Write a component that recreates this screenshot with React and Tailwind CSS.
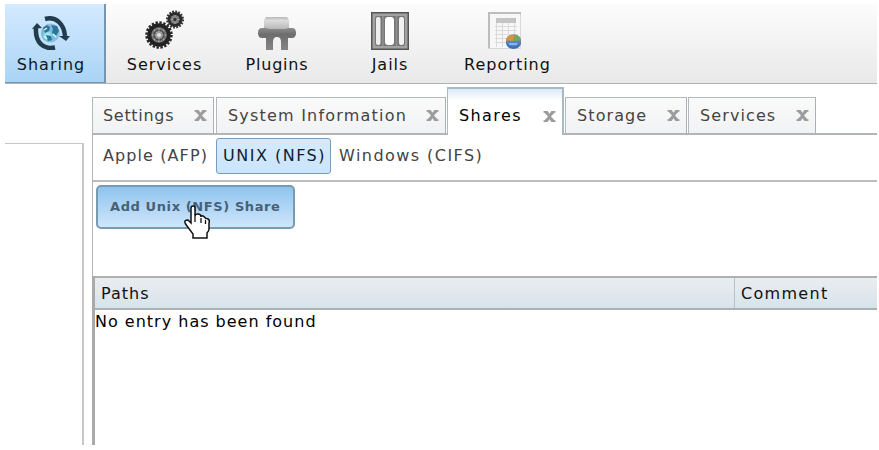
function SharingIcon() {
  return (
    <svg width="38" height="34" viewBox="0 0 38 34">
      <defs>
        <radialGradient id="globe" cx="35%" cy="60%">
          <stop offset="0" stopColor="#b8f2ff" />
          <stop offset="0.6" stopColor="#6fb9d6" />
          <stop offset="1" stopColor="#8fc0e6" />
        </radialGradient>
      </defs>
      <circle cx="18.5" cy="17" r="9.5" fill="url(#globe)" />
      <path d="M11 12l4-3 3 2-1 4-4 2zM19 9l6 1 2 5-3 5-4-3 1-4zM14 19l5 1 1 4-4 1z" fill="#2c7596" />
      <path d="M12 14l3-2M21 18l3 3M12 20l3 3" stroke="#d8fbff" strokeWidth="1.5" />
      <path d="M13 3C24 0 32 8 33 20" fill="none" stroke="#223c4d" strokeWidth="4.5" />
      <path d="M27 20h11l-4 5z" fill="#223c4d" />
      <path d="M23 31.500C11 34 3 26 4 12" fill="none" stroke="#223c4d" strokeWidth="4.500" />
      <path d="M0 13l5-6 5 5z" fill="#223c4d" />
    </svg>
  );
}

function ServicesIcon() {
  return (
    <svg width="40" height="40" viewBox="0 0 40 40">
      <circle cx="14" cy="25" r="12.500" fill="none" stroke="#292929" strokeWidth="2.500" strokeDasharray="2.4 1.527" />
      <circle cx="14" cy="25" r="9.800" fill="#777" stroke="#222" strokeWidth="4" />
      <path d="M14 18v14M7 25h14M9 20l10 10M19 20L9 30" stroke="#aaa" strokeWidth="1.500" />
      <circle cx="14" cy="25" r="5" fill="none" stroke="#444" strokeWidth="1.200" />
      <circle cx="14" cy="25" r="2" fill="#ddd" />
      <circle cx="30" cy="9.500" r="8" fill="none" stroke="#333" strokeWidth="2" strokeDasharray="1.8 1.342" />
      <circle cx="30" cy="9.500" r="6" fill="#777" stroke="#2b2b2b" strokeWidth="3" />
      <path d="M30 5v9M25.500 9.500h9M27 6.500l6 6M33 6.500l-6 6" stroke="#a5a5a5" />
      <circle cx="30" cy="9.500" r="1.700" fill="#333" />
    </svg>
  );
}

function PluginsIcon() {
  return (
    <svg width="38" height="33" viewBox="0 0 38 33">
      <defs>
        <linearGradient id="plugTop" x2="0" y2="1">
          <stop offset="0" stopColor="#b8b8b8" />
          <stop offset="0.25" stopColor="#dcdcdc" />
          <stop offset="1" stopColor="#b0b0b0" />
        </linearGradient>
        <linearGradient id="plugBase" x2="0" y2="1">
          <stop offset="0" stopColor="#8c8c8c" />
          <stop offset="0.3" stopColor="#6d6d6d" />
          <stop offset="1" stopColor="#858585" />
        </linearGradient>
      </defs>
      <path d="M8 0h21l2 3v11H6V3z" fill="url(#plugTop)" />
      <path d="M4 11h4l3 1h16l3-1h4q4 0 4 5t-4 5h-4v12h-7v-8q0-5-4-5t-4 5v8H8V21H4q-4 0-4-5t4-5z" fill="url(#plugBase)" />
    </svg>
  );
}

function JailsIcon() {
  return (
    <svg width="38" height="38" viewBox="0 0 38 38">
      <rect width="38" height="38" fill="#555" />
      <rect x="1.500" y="1.500" width="35" height="35" fill="#a2a2a2" />
      <rect x="4" y="4" width="30" height="30" rx="2" fill="#777" />
      <rect x="5" y="5" width="4.500" height="28" rx="2" fill="#eee" />
      <rect x="14" y="5" width="9" height="28" rx="3" fill="#fff" />
      <rect x="28" y="5" width="5" height="28" rx="2" fill="#f2f2f2" />
      <path d="M12 4v30M25.500 4v30" stroke="#929292" strokeWidth="1.500" />
    </svg>
  );
}

function ReportingIcon() {
  return (
    <svg width="34" height="38" viewBox="0 0 34 38">
      <rect x="0.500" y="0.500" width="32" height="36" fill="#f7f7f7" stroke="#d8d8d8" />
      <path d="M0 1h33M1 0v36" stroke="#bdbdbd" strokeWidth="2" />
      <rect x="8" y="6" width="20" height="5" fill="#c4c4c4" />
      <path d="M7 14.500h22M7 18.500h22M7 22.500h22M7 26.500h12M7 30.500h12M8.500 11v24M14.500 11v24M20.500 11v12M26.500 11v12" stroke="#dadada" />
      <ellipse cx="25.500" cy="31" rx="7.500" ry="6" fill="#436eae" />
      <ellipse cx="25.500" cy="28.500" rx="7.500" ry="6" fill="#5984c2" />
      <path d="M25.500 29l-7.500-.5q1-6.500 8.500-6z" fill="#d19346" />
      <path d="M25.500 29l1-6.500q6 .5 6.500 6z" fill="#79a65a" />
      <path d="M21 32h8" stroke="#7dbbed" strokeWidth="2" />
    </svg>
  );
}

function CloseMark() {
  return (
    <svg className="shrink-0" width="13" height="11" viewBox="0 0 13 12">
      <path d="M0 0h4.500l2 3 2-3H13v2h-1L8.500 5.500v1L12 10h1v2H8.500l-2-3-2 3H0v-2h1l3.500-3.500v-1L1 2H0z" fill="#9c9c9c" />
    </svg>
  );
}

function ToolItem({ icon, label, box, iconBox }) {
  return (
    <div className={`flex h-full flex-col items-center ${box}`}>
      <div className={`flex h-[46px] items-end ${iconBox}`}>{icon}</div>
      <span className="mt-[5px] leading-5">{label}</span>
    </div>
  );
}

function Tab({ label, box, text }) {
  return (
    <div className={`flex items-center justify-between border border-b-0 pr-[6px] pl-[11px] ${box}`}>
      <span className={text}>{label}</span>
      <CloseMark />
    </div>
  );
}

const idleTab = "h-[36px] border-[#b4b9bd] border-r-[#aab0b5] bg-linear-to-b from-[#fafafa] to-[#f1f2f3] text-[#444]";

export default function App() {
  return (
    <div className="h-[450px] w-[879px] overflow-hidden bg-white pt-[4px] pl-[5px] font-['DejaVu_Sans',Verdana,sans-serif] text-[16px] leading-5 whitespace-nowrap text-[#111]">
      <div className="flex h-[441px] w-[872px] flex-col overflow-hidden">
        <header className="flex h-[80px] shrink-0 border-b border-[#adb3b7] bg-linear-to-b from-[#fcfcfc] to-[#e9e9e9]">
          <ToolItem
            icon={<SharingIcon />}
            label="Sharing"
            box="w-[101px] h-[80px] shrink-0 border-r-2 border-b border-[#7696b0] bg-linear-to-b from-[#d4eaff] to-[#aad4f5] pr-[7px] tracking-[1px] text-[#0d1726]"
            iconBox=""
          />
          <ToolItem icon={<ServicesIcon />} label="Services" box="w-[117px] tracking-[1px]" iconBox="" />
          <ToolItem icon={<PluginsIcon />} label="Plugins" box="w-[108px] tracking-[0.8px]" iconBox="" />
          <ToolItem icon={<JailsIcon />} label="Jails" box="w-[118px] tracking-[1px]" iconBox="" />
          <ToolItem icon={<ReportingIcon />} label="Reporting" box="w-[117px] tracking-[1px]" iconBox="pr-[6px]" />
        </header>

        <div className="flex min-h-0 flex-1">
          <aside className="mt-[59px] w-[79px] shrink-0 border-t border-r-2 border-[#c7c7c7]" />

          <main className="ml-[8px] flex min-w-0 flex-1 flex-col">
            <nav className="flex h-[51px] shrink-0 items-end border-b-2 border-[#b1b5b8]">
              <Tab label="Settings" box={`w-[122px] mr-[2px] ${idleTab}`} text="-ml-px tracking-[0.7px]" />
              <Tab label="System Information" box={`w-[230px] mr-px ${idleTab}`} text="tracking-[1.2px]" />
              <Tab
                label="Shares"
                box="relative z-10 -mb-[2px] h-[48px] w-[117px] border-t-2 border-r-2 border-[#a9bac7] bg-linear-to-b from-[#dce9f8] via-white via-25% to-white pt-[8px] text-black"
                text="tracking-[1.4px]"
              />
              <Tab label="Storage" box={`ml-px w-[122px] mr-px ${idleTab}`} text="tracking-[1.1px]" />
              <Tab label="Services" box={`w-[128px] ${idleTab}`} text="tracking-[1.1px]" />
            </nav>

            <section className="flex min-h-0 flex-1 flex-col border-l border-[#b5b5b5]">
              <div className="flex h-[47px] shrink-0 items-start border-b-2 border-[#bdbdbd] pt-[3px] text-[#444]">
                <span className="flex h-[36px] w-[123px] shrink-0 items-center pl-[10px] tracking-[1.1px]">Apple (AFP)</span>
                <span className="flex h-[36px] w-[115px] shrink-0 items-center rounded-[3px] border border-[#769dc0] bg-linear-to-b from-[#d5eaff] to-[#cae5fa] pl-[6px] tracking-[1.5px] text-[#14202e]">
                  UNIX (NFS)
                </span>
                <span className="flex h-[36px] items-center pl-[8px] tracking-[1.45px]">Windows (CIFS)</span>
              </div>

              <div className="h-[94px] shrink-0 pt-[3px] pl-[3px]">
                <button className="relative flex h-[44px] w-[199px] items-center rounded-[5px] border-2 border-[#779bb1] bg-linear-to-b from-[#8fc4ee] to-[#cfe6fb] pb-px pl-[12px] text-[13px] font-bold tracking-[0.6px] text-[#466177]">
                  Add Unix (NFS) Share
                  <svg className="absolute top-[18px] left-[85px]" width="27" height="35" viewBox="0 0 27 35">
                    <path
                      d="M8 3q0-2 2-2t2 2v8q0-2 3-2t3 3q0-2 2-1t3 3q0-1 2 0t1 4v6q0 2-2 4v5H10v-4l-6-8q-3-4-2-5t3-1l3 3z"
                      fill="#fff"
                      stroke="#111"
                      strokeWidth="1.500"
                    />
                    <path d="M12 11v6M18 13v5M22.500 15v4" stroke="#111" strokeWidth="1.300" />
                  </svg>
                </button>
              </div>

              <div className="-ml-px flex min-h-0 flex-1 flex-col border-l-[3px] border-[#aaa]">
                <div className="flex h-[34px] shrink-0 border-y-2 border-[#acb2b4] bg-linear-to-b from-[#eaedf0] to-[#d7e3eb]">
                  <span className="flex w-[640px] shrink-0 items-center border-r border-[#b9c1c7] pt-[2px] pl-[6px] tracking-[1px]">Paths</span>
                  <span className="flex items-center pt-[2px] pl-[6px] tracking-[1.3px]">Comment</span>
                </div>
                <p className="mt-[2px] text-black tracking-[1px]">No entry has been found</p>
              </div>
            </section>
          </main>
        </div>
      </div>
    </div>
  );
}
